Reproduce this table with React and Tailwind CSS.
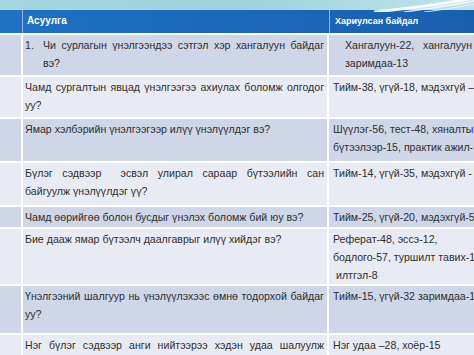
const rows = [
  {
    h: 'h-[42px]',
    tone: 'bg-[#cfd6e7]',
    left: (
      <div className="flex">
        <span className="w-[18px] shrink-0">1.</span>
        <div className="flex-1">
          <div className="whitespace-nowrap [text-align-last:justify]">Чи сурлагын үнэлгээндээ сэтгэл хэр хангалуун байдаг</div>
          <div>вэ?</div>
        </div>
      </div>
    ),
    right: (
      <div className="pl-[12px]">
        <div>Хангалуун-22,&nbsp;&nbsp; хангалуун</div>
        <div>заримдаа-13</div>
      </div>
    ),
  },
  {
    h: 'h-[42px]',
    tone: 'bg-[#e8ebf3]',
    left: (
      <>
        <div className="whitespace-nowrap [text-align-last:justify]">Чамд сургалтын явцад үнэлгээгээ ахиулах боломж олгодог</div>
        <div>уу?</div>
      </>
    ),
    right: <div>Тийм-38, үгүй-18, мэдэхгүй –</div>,
  },
  {
    h: 'h-[44px]',
    tone: 'bg-[#cfd6e7]',
    left: <div>Ямар хэлбэрийн үнэлгээгээр илүү үнэлүүлдэг вэ?</div>,
    right: (
      <>
        <div>Шүүлэг-56, тест-48, хяналтын</div>
        <div>бүтээлээр-15, практик ажил-</div>
      </>
    ),
  },
  {
    h: 'h-[44px]',
    tone: 'bg-[#e8ebf3]',
    left: (
      <>
        <div className="whitespace-nowrap [text-align-last:justify]">Бүлэг сэдвээр &nbsp;эсвэл улирал сараар бүтээлийн сан</div>
        <div>байгуулж үнэлүүлдэг үү?</div>
      </>
    ),
    right: <div>Тийм-14, үгүй-35, мэдэхгүй -</div>,
  },
  {
    h: 'h-[22px]',
    tone: 'bg-[#cfd6e7]',
    left: <div>Чамд өөрийгөө болон бусдыг үнэлэх боломж бий юу вэ?</div>,
    right: <div>Тийм-25, үгүй-20, мэдэхгүй-5</div>,
  },
  {
    h: 'h-[57px]',
    tone: 'bg-[#e8ebf3]',
    left: <div>Бие дааж ямар бүтээлч даалгаврыг илүү хийдэг вэ?</div>,
    right: (
      <>
        <div>Реферат-48, эссэ-12,</div>
        <div>бодлого-57, туршилт тавих-1</div>
        <div className="pl-[3px]">илтгэл-8</div>
      </>
    ),
  },
  {
    h: 'h-[49px]',
    tone: 'bg-[#cfd6e7]',
    left: (
      <>
        <div className="whitespace-nowrap [text-align-last:justify]">Үнэлгээний шалгуур нь үнэлүүлэхээс өмнө тодорхой байдаг</div>
        <div>уу?</div>
      </>
    ),
    right: <div>Тийм-15, үгүй-32 заримдаа-1</div>,
  },
  {
    h: 'h-[30px]',
    tone: 'bg-[#e8ebf3]',
    left: <div className="whitespace-nowrap [text-align-last:justify]">Нэг бүлэг сэдвээр анги нийтээрээ хэдэн удаа шалуулж</div>,
    right: <div>Нэг удаа –28, хоёр-15</div>,
  },
]

function Swoosh() {
  return (
    <svg className="absolute right-0 top-0" width="120" height="12" viewBox="0 0 120 12">
      <path d="M20 12 C60 8 90 4 120 -2" stroke="#ffffff" strokeWidth="3" fill="none" opacity="0.9" />
      <path d="M50 12 C80 8 100 5 120 1" stroke="#ffffff" strokeWidth="1.5" fill="none" opacity="0.8" />
      <path d="M70 12 C95 9 108 6 120 4" stroke="#e6f6fa" strokeWidth="1" fill="none" opacity="0.9" />
    </svg>
  )
}

export default function App() {
  return (
    <div className="w-[474px] h-[355px] overflow-hidden bg-white font-['Liberation_Sans',Arial,sans-serif] text-[10.6px] leading-[18px] text-[#2f2f2f]">
      <div className="relative h-[10px] bg-gradient-to-r from-[#a6d7e0] via-[#9fd3dd] to-[#bfe3ea]">
        <Swoosh />
      </div>
      <div className="flex h-[23px] w-[474px] bg-gradient-to-r from-[#2072c4] to-[#195fae] text-white font-bold">
        <div className="w-[23px] shrink-0 border-r border-[#8fb3de]" />
        <div className="w-[307px] shrink-0 border-r border-[#8fb3de] pl-[4px] pt-[2px] text-[10px]">Асуулга</div>
        <div className="flex-1 pl-[5px] pt-[2px] text-[9px]">Хариулсан байдал</div>
      </div>
      {rows.map((r, i) => (
        <div key={i} className={`flex w-[474px] ${r.h} ${r.tone} border-t-2 border-white`}>
          <div className="w-[23px] shrink-0 border-r-2 border-white" />
          <div className="w-[306px] shrink-0 border-r-2 border-white pl-[2px] pr-[3px] pt-px">{r.left}</div>
          <div className="min-w-0 flex-1 overflow-hidden pl-[4px] pt-px whitespace-nowrap">{r.right}</div>
        </div>
      ))}
    </div>
  )
}
